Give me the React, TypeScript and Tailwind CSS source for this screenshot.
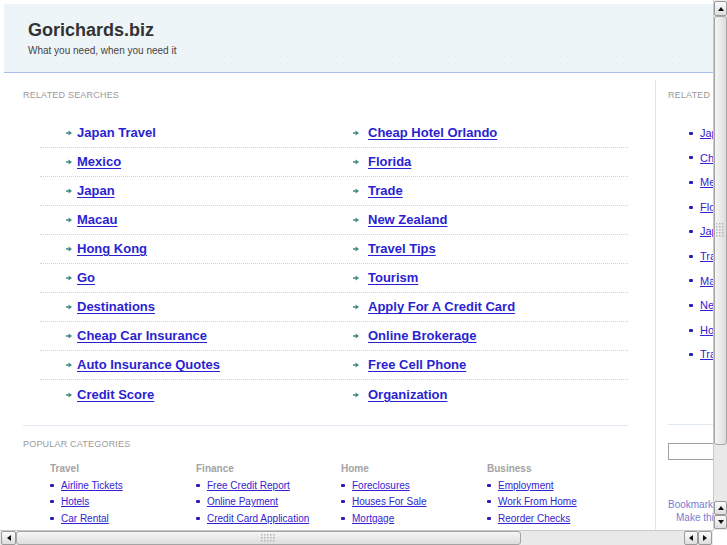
import React from 'react'

const leftLinks = [
  'Japan Travel',
  'Mexico',
  'Japan',
  'Macau',
  'Hong Kong',
  'Go',
  'Destinations',
  'Cheap Car Insurance',
  'Auto Insurance Quotes',
  'Credit Score',
]

const rightLinks = [
  'Cheap Hotel Orlando',
  'Florida',
  'Trade',
  'New Zealand',
  'Travel Tips',
  'Tourism',
  'Apply For A Credit Card',
  'Online Brokerage',
  'Free Cell Phone',
  'Organization',
]

const sideLinks = [
  'Japan Travel',
  'Cheap Hotel Orlando',
  'Mexico',
  'Florida',
  'Japan',
  'Trade',
  'Macau',
  'New Zealand',
  'Hong Kong',
  'Travel Tips',
]

const categories = [
  { title: 'Travel', links: ['Airline Tickets', 'Hotels', 'Car Rental'] },
  {
    title: 'Finance',
    links: ['Free Credit Report', 'Online Payment', 'Credit Card Application'],
  },
  { title: 'Home', links: ['Foreclosures', 'Houses For Sale', 'Mortgage'] },
  {
    title: 'Business',
    links: ['Employment', 'Work From Home', 'Reorder Checks'],
  },
]

function Arrow() {
  return (
    <svg width="6" height="6" viewBox="0 0 6 6" className="shrink-0">
      <path d="M0 2.2h2.6V0.4L6 3 2.6 5.6V3.8H0z" fill="#3f8b83" />
    </svg>
  )
}

function Bullet() {
  return <span className="inline-block w-[4px] h-[3px] rounded-[1px] bg-[#2a1fb8] shrink-0" />
}

function Triangle({ dir }: { dir: 'up' | 'down' | 'left' | 'right' }) {
  const d = {
    up: 'M1 6h6L4 2z',
    down: 'M1 2h6L4 6z',
    left: 'M6 1v6L2 4z',
    right: 'M2 1v6l4-3z',
  }[dir]
  return (
    <svg width="8" height="8" viewBox="0 0 8 8">
      <path d={d} fill="#111" />
    </svg>
  )
}

function ScrollButton({
  dir,
  className = '',
}: {
  dir: 'up' | 'down' | 'left' | 'right'
  className?: string
}) {
  return (
    <div
      className={`flex items-center justify-center border border-[#9a9a9a] rounded-[2px] bg-gradient-to-b from-[#fbfbfb] to-[#dedede] ${className}`}
    >
      <Triangle dir={dir} />
    </div>
  )
}

function Grip({ vertical }: { vertical?: boolean }) {
  const dots = []
  const cols = vertical ? 3 : 5
  const rows = vertical ? 5 : 3
  for (let r = 0; r < rows; r++)
    for (let c = 0; c < cols; c++)
      dots.push(<rect key={`${r}-${c}`} x={c * 3} y={r * 3} width="1.5" height="1.5" fill="#b4b4b4" />)
  return (
    <svg width={cols * 3} height={rows * 3}>
      {dots}
    </svg>
  )
}

function LinkRow({ left, right, last, plain }: { left: string; right: string; last: boolean; plain: boolean }) {
  return (
    <div
      className={`flex items-center h-[29px] ${
        last ? '' : 'border-b border-dotted border-[#c3d5ec]'
      }`}
    >
      <div className="w-[313px] flex items-center gap-[5px] pl-[26px]">
        <Arrow />
        <span className={`text-[13px] font-bold text-[#2b1fd2] ${plain ? '' : 'underline underline-offset-2'}`}>
          {left}
        </span>
      </div>
      <div className="flex items-center gap-[9px]">
        <Arrow />
        <span className="text-[13px] font-bold text-[#2b1fd2] underline underline-offset-2">{right}</span>
      </div>
    </div>
  )
}

export default function App() {
  return (
    <div
      className="w-[727px] h-[545px] overflow-hidden bg-white flex flex-col"
      style={{ fontFamily: '"Liberation Sans", Arial, sans-serif' }}
    >
      <div className="flex h-[530px]">
        <div className="w-[713px] h-full overflow-hidden">
          <div className="w-[900px] pt-[4px] pl-[4px]">
            <div className="h-[69px] border-b border-[#a9bfe7] bg-[#eef5f8] bg-[radial-gradient(#e3ecf1_0.6px,transparent_0.7px)] bg-[length:7px_7px] pl-[24px] pt-[16px]">
              <div className="text-[18px] leading-[21px] font-bold text-[#333]">Gorichards.biz</div>
              <div className="mt-[4px] text-[10px] leading-[12px] text-[#444]">What you need, when you need it</div>
            </div>

            <div className="flex mt-[7px]">
              <div className="w-[651px] pl-[19px] pt-[10px]">
                <div className="text-[9px] leading-[11px] text-[#9a9a9a] tracking-[0.2px]">RELATED SEARCHES</div>
                <div className="ml-[17px] w-[588px] mt-[18px]">
                  {leftLinks.map((l, i) => (
                    <LinkRow
                      key={l}
                      left={l}
                      right={rightLinks[i]}
                      last={i === leftLinks.length - 1}
                      plain={i === 0}
                    />
                  ))}
                </div>
                <div className="w-[605px] mt-[16px] border-t border-[#e1e9f2]" />
                <div className="mt-[13px] text-[9px] leading-[11px] text-[#9a9a9a] tracking-[0.2px]">
                  POPULAR CATEGORIES
                </div>
                <div className="ml-[27px] mt-[13px] grid grid-cols-[146px_145px_146px_145px]">
                  {categories.map((c) => (
                    <div key={c.title}>
                      <div className="text-[10px] leading-[12px] font-bold text-[#a3a3a3]">{c.title}</div>
                      <div className="mt-[2px]">
                        {c.links.map((l) => (
                          <div key={l} className="flex items-center gap-[7px] h-[16.5px]">
                            <Bullet />
                            <span className="text-[10px] text-[#3322d0] underline">{l}</span>
                          </div>
                        ))}
                      </div>
                    </div>
                  ))}
                </div>
              </div>

              <div className="w-[220px] border-l border-[#dde6f2] pl-[12px] pt-[10px] h-[460px]">
                <div className="text-[9px] leading-[11px] text-[#9a9a9a] tracking-[0.2px]">RELATED SEARCHES</div>
                <div className="mt-[20px] pl-[21px]">
                  {sideLinks.map((l) => (
                    <div key={l} className="flex items-center gap-[7px] h-[24.6px]">
                      <Bullet />
                      <span className="text-[11px] text-[#3322d0] underline whitespace-nowrap">{l}</span>
                    </div>
                  ))}
                </div>
                <div className="mt-[57px] border-t border-[#e1e9f2]" />
                <div className="mt-[18px] h-[17px] w-[180px] border border-[#a0a0a0] bg-white" />
                <div className="mt-[38px] text-[10px] leading-[13px] text-[#7b7bd2] whitespace-nowrap">
                  Bookmark this page
                </div>
                <div className="pl-[8px] text-[10px] leading-[13px] text-[#7b7bd2] whitespace-nowrap">
                  Make this your homepage
                </div>
              </div>
            </div>
          </div>
        </div>

        <div className="w-[14px] h-full flex flex-col bg-[#e9e9e9] border-l border-[#c9c9c9]">
          <ScrollButton dir="up" className="h-[15px] mt-[1px]" />
          <div className="h-[429px] border border-[#a4a4a4] rounded-[3px] bg-gradient-to-r from-[#f6f6f6] to-[#dddddd] flex items-center justify-center">
            <Grip vertical />
          </div>
          <div className="flex-1" />
          <ScrollButton dir="up" className="h-[14px]" />
          <ScrollButton dir="down" className="h-[14px] mb-[1px]" />
        </div>
      </div>

      <div className="flex h-[15px]">
        <div className="w-[713px] h-full flex bg-[#e9e9e9] border-t border-[#c9c9c9]">
          <ScrollButton dir="left" className="w-[15px] ml-[1px]" />
          <div className="w-[505px] border border-[#a4a4a4] rounded-[3px] bg-gradient-to-b from-[#f6f6f6] to-[#dddddd] flex items-center justify-center">
            <Grip />
          </div>
          <div className="flex-1" />
          <ScrollButton dir="left" className="w-[14px]" />
          <ScrollButton dir="right" className="w-[14px] mr-[1px]" />
        </div>
        <div className="w-[14px] h-full bg-white" />
      </div>
    </div>
  )
}
